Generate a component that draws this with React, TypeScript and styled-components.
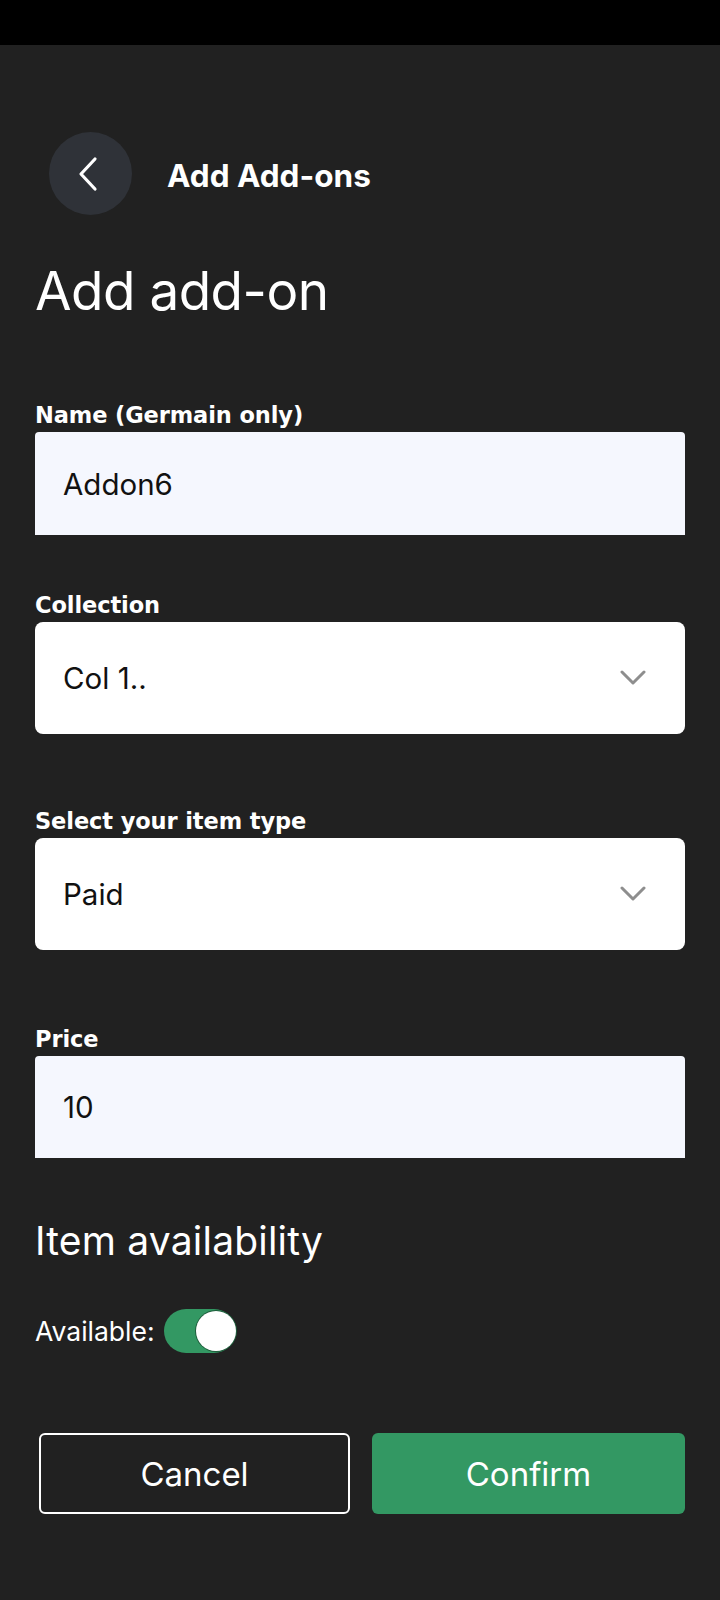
import React from "react";
import styled, { createGlobalStyle } from "styled-components";

const GlobalStyle = createGlobalStyle`
  html, body { margin: 0; padding: 0; background: #212121; }
  body { font-family: Inter, "Noto Sans", "Liberation Sans", sans-serif; -webkit-font-smoothing: antialiased; }
  * { box-sizing: border-box; }
`;

const Screen = styled.div`
  width: 720px;
  min-height: 1600px;
  background: #212121;
  color: #ffffff;
  display: flex;
  flex-direction: column;
`;

const StatusBar = styled.div`
  height: 45px;
  background: #000000;
`;

const Content = styled.div`
  display: flex;
  flex-direction: column;
  padding: 0 35px;
`;

const Header = styled.div`
  margin-top: 87px;
  height: 83px;
  display: flex;
  align-items: center;
  gap: 35px;
  padding-left: 14px;
`;

const BackButton = styled.button`
  width: 83px;
  height: 83px;
  border-radius: 50%;
  border: none;
  background: #2f3238;
  display: flex;
  align-items: center;
  justify-content: center;
  padding: 0 4px 0 0;
  color: #ffffff;
`;

const HeaderTitle = styled.div`
  font-size: 31.5px;
  font-weight: 700;
  padding-top: 3px;
`;

const Heading = styled.h1`
  margin: 44px 0 0;
  font-size: 53px;
  line-height: 64px;
  font-weight: 400;
  letter-spacing: -0.5px;
`;

const Field = styled.div<{ $gap: number }>`
  margin-top: ${(p) => p.$gap}px;
  display: flex;
  flex-direction: column;
  gap: 4px;
`;

const Label = styled.label`
  font-family: "DejaVu Sans", Inter, sans-serif;
  font-size: 22.5px;
  line-height: 26px;
  font-weight: 700;
  letter-spacing: -0.1px;
`;

const TextBox = styled.div<{ $height: number }>`
  height: ${(p) => p.$height}px;
  background: #f5f7fe;
  border-radius: 4px 4px 0 0;
  display: flex;
  align-items: center;
  padding-left: 28px;
  color: #111111;
  font-size: 29.5px;
`;

const SelectBox = styled.div`
  height: 112px;
  background: #ffffff;
  border-radius: 8px;
  display: flex;
  align-items: center;
  justify-content: space-between;
  padding: 0 39px 0 28px;
  color: #111111;
  font-size: 29.5px;
`;

const SectionTitle = styled.h2`
  margin: 60px 0 0;
  font-size: 39px;
  line-height: 46px;
  font-weight: 400;
  letter-spacing: 0.2px;
`;

const ToggleRow = styled.div`
  margin-top: 45px;
  display: flex;
  align-items: center;
  gap: 9px;
  font-size: 26.5px;
`;

const Track = styled.div<{ $on: boolean }>`
  width: 72px;
  height: 44px;
  border-radius: 22px;
  background: ${(p) => (p.$on ? "#339863" : "#666")};
  display: flex;
  align-items: center;
  justify-content: ${(p) => (p.$on ? "flex-end" : "flex-start")};
  padding: 2px 0;
`;

const Thumb = styled.div`
  width: 40px;
  height: 40px;
  border-radius: 50%;
  background: #ffffff;
  box-shadow: 0 0 0 1px #1f5e3c;
`;

const Buttons = styled.div`
  margin-top: 80px;
  display: grid;
  grid-template-columns: 311px 313px;
  justify-content: space-between;
  padding-left: 4px;
`;

const Button = styled.button<{ $primary?: boolean }>`
  height: 81px;
  border-radius: 6px;
  border: ${(p) => (p.$primary ? "none" : "2px solid #ffffff")};
  background: ${(p) => (p.$primary ? "#339863" : "transparent")};
  color: #ffffff;
  font-family: inherit;
  font-size: 33px;
  font-weight: 400;
`;

const Chevron = () => (
  <svg width="26" height="16" viewBox="0 0 26 16" fill="none">
    <path d="M2 2 L13 13 L24 2" stroke="#8e8e8e" strokeWidth="3" strokeLinecap="round" strokeLinejoin="round" />
  </svg>
);

const BackIcon = () => (
  <svg width="22" height="36" viewBox="0 0 22 36" fill="none">
    <path d="M17 3 L3 18 L17 33" stroke="#ffffff" strokeWidth="3.2" strokeLinecap="round" strokeLinejoin="round" />
  </svg>
);

export default function App() {
  return (
    <>
      <GlobalStyle />
      <Screen>
        <StatusBar />
        <Content>
          <Header>
            <BackButton aria-label="Back">
              <BackIcon />
            </BackButton>
            <HeaderTitle>Add Add-ons</HeaderTitle>
          </Header>
          <Heading>Add add-on</Heading>

          <Field $gap={79}>
            <Label>Name (Germain only)</Label>
            <TextBox $height={103}>Addon6</TextBox>
          </Field>

          <Field $gap={57}>
            <Label>Collection</Label>
            <SelectBox>
              <span>Col 1..</span>
              <Chevron />
            </SelectBox>
          </Field>

          <Field $gap={74}>
            <Label>Select your item type</Label>
            <SelectBox>
              <span>Paid</span>
              <Chevron />
            </SelectBox>
          </Field>

          <Field $gap={76}>
            <Label>Price</Label>
            <TextBox $height={102}>10</TextBox>
          </Field>

          <SectionTitle>Item availability</SectionTitle>

          <ToggleRow>
            <span>Available:</span>
            <Track $on>
              <Thumb />
            </Track>
          </ToggleRow>

          <Buttons>
            <Button>Cancel</Button>
            <Button $primary>Confirm</Button>
          </Buttons>
        </Content>
      </Screen>
    </>
  );
}
